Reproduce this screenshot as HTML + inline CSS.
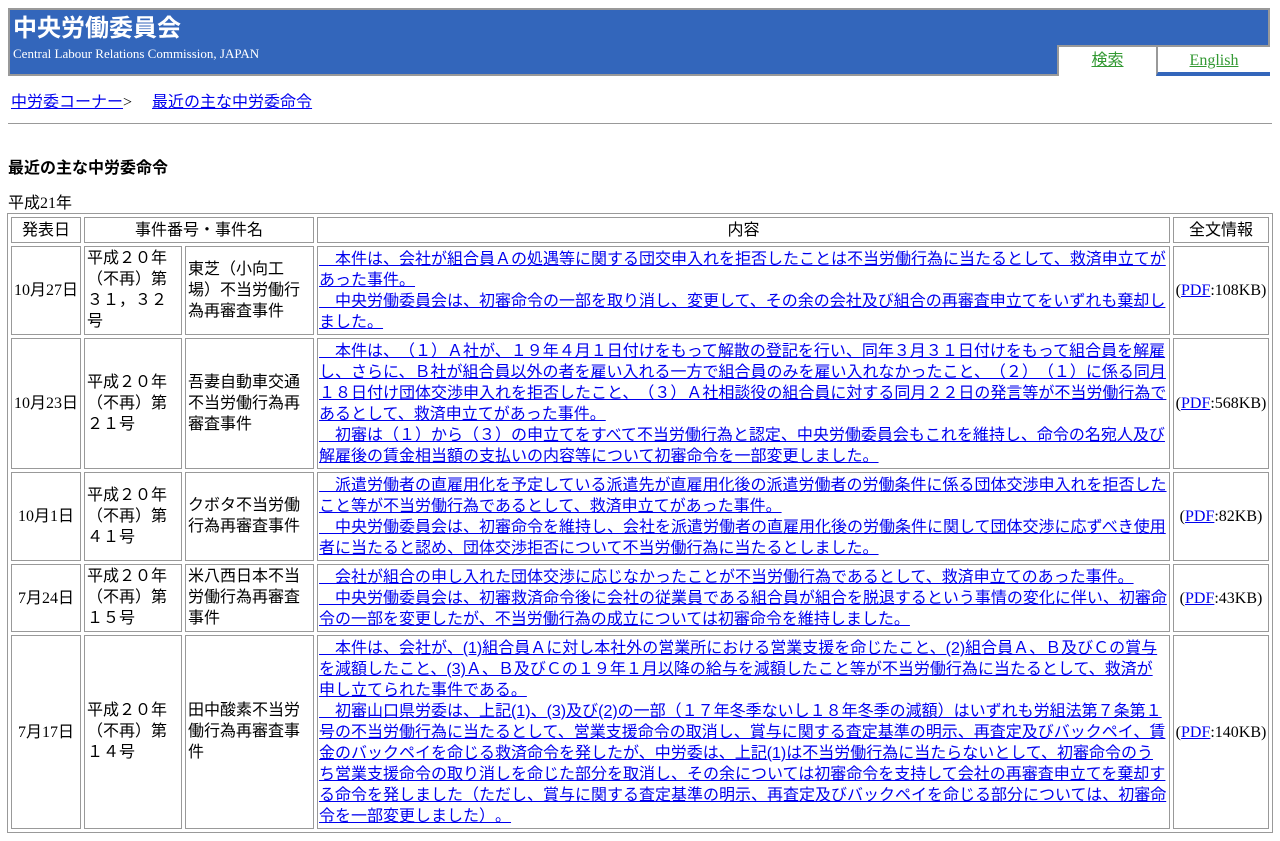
<!DOCTYPE html>
<html><head><meta charset="utf-8"><style>
body{margin:8px;font-family:"Liberation Serif","Noto Sans CJK JP",serif;font-size:16px;color:#000;background:#fff;text-spacing-trim:space-all}
#hd{position:relative;height:64px;width:1258px;background:#3366bb;border:2px solid #999;margin-top:0}
#hd h1{margin:0;position:absolute;left:3px;top:3px;color:#fff;font-size:24px;font-weight:bold;font-family:"Liberation Sans","Noto Sans CJK JP",sans-serif;line-height:32px}
#hd .en{position:absolute;left:3px;top:36px;color:#fff;font-size:13px}
.tab{position:absolute;top:35px;height:29px;background:#fff;text-align:center;line-height:28px}
.tab a{color:#339933}
#t1{left:1047px;width:97px;border-left:2px solid #999;border-top:2px solid #999}
#t2{left:1146px;width:112px;border-left:2px solid #999;border-top:2px solid #999;height:25px;border-bottom:4px solid #3366bb}
.bc{margin:16px 0 0 3px;line-height:21px}
a{color:#0000ee}
hr{border:0;border-top:1px solid #999;margin:10px 0 0}
h3{font-size:16px;margin:30px 0 0;font-family:"Liberation Sans","Noto Sans CJK JP",sans-serif}
.yr{margin-top:16px;line-height:20px}
table{border-collapse:separate;border-spacing:3px;border:1px solid #999;table-layout:fixed;width:1265px;margin-left:-1px;margin-top:-1px;font-family:"Liberation Serif","Noto Sans CJK JP",serif}
td,th{border:1px solid #999;padding:1px 2px 2px;line-height:21px;font-weight:normal;vertical-align:middle}
th{text-align:center;padding:2px 1px 1px}
td.c{text-align:center;padding:1px}
td.n{font-family:"Liberation Sans","Noto Sans CJK JP",sans-serif}
td.x{padding:2px 1px 1px;font-family:"Liberation Sans","Noto Sans CJK JP",sans-serif}
</style></head><body>
<div id="hd"><h1>中央労働委員会</h1><div class="en">Central Labour Relations Commission, JAPAN</div>
<div class="tab" id="t1"><a href="#">検索</a></div><div class="tab" id="t2"><a href="#">English</a></div></div>
<div class="bc"><a href="#">中労委コーナー</a>&gt;　 <a href="#">最近の主な中労委命令</a></div>
<hr>
<h3>最近の主な中労委命令</h3>
<div class="yr">平成21年</div>
<table>
<colgroup><col style="width:70px"><col style="width:98px"><col style="width:129px"><col style="width:853px"><col style="width:96px"></colgroup>
<tr><th>発表日</th><th colspan="2" class="n">事件番号・事件名</th><th>内容</th><th>全文情報</th></tr>
<tr><td class="c">10月27日</td><td class="n">平成２０年（不再）第３１，３２号</td><td class="n">東芝（小向工場）不当労働行為再審査事件</td><td class="x"><a href="#">　本件は、会社が組合員Ａの処遇等に関する団交申入れを拒否したことは不当労働行為に当たるとして、救済申立てがあった事件。<br>　中央労働委員会は、初審命令の一部を取り消し、変更して、その余の会社及び組合の再審査申立てをいずれも棄却しました。</a></td><td class="c">(<a href="#">PDF</a>:108KB)</td></tr>
<tr><td class="c">10月23日</td><td class="n">平成２０年（不再）第２１号</td><td class="n">吾妻自動車交通不当労働行為再審査事件</td><td class="x"><a href="#">　本件は、（１）Ａ社が、１９年４月１日付けをもって解散の登記を行い、同年３月３１日付けをもって組合員を解雇し、さらに、Ｂ社が組合員以外の者を雇い入れる一方で組合員のみを雇い入れなかったこと、（２）（１）に係る同月１８日付け団体交渉申入れを拒否したこと、（３）Ａ社相談役の組合員に対する同月２２日の発言等が不当労働行為であるとして、救済申立てがあった事件。<br>　初審は（１）から（３）の申立てをすべて不当労働行為と認定、中央労働委員会もこれを維持し、命令の名宛人及び解雇後の賃金相当額の支払いの内容等について初審命令を一部変更しました。</a></td><td class="c">(<a href="#">PDF</a>:568KB)</td></tr>
<tr><td class="c">10月1日</td><td class="n">平成２０年（不再）第４１号</td><td class="n">クボタ不当労働行為再審査事件</td><td class="x"><a href="#">　派遣労働者の直雇用化を予定している派遣先が直雇用化後の派遣労働者の労働条件に係る団体交渉申入れを拒否したこと等が不当労働行為であるとして、救済申立てがあった事件。<br>　中央労働委員会は、初審命令を維持し、会社を派遣労働者の直雇用化後の労働条件に関して団体交渉に応ずべき使用者に当たると認め、団体交渉拒否について不当労働行為に当たるとしました。</a></td><td class="c">(<a href="#">PDF</a>:82KB)</td></tr>
<tr><td class="c">7月24日</td><td class="n">平成２０年（不再）第１５号</td><td class="n">米八西日本不当労働行為再審査事件</td><td class="x"><a href="#">　会社が組合の申し入れた団体交渉に応じなかったことが不当労働行為であるとして、救済申立てのあった事件。<br>　中央労働委員会は、初審救済命令後に会社の従業員である組合員が組合を脱退するという事情の変化に伴い、初審命令の一部を変更したが、不当労働行為の成立については初審命令を維持しました。</a></td><td class="c">(<a href="#">PDF</a>:43KB)</td></tr>
<tr><td class="c">7月17日</td><td class="n">平成２０年（不再）第１４号</td><td class="n">田中酸素不当労働行為再審査事件</td><td class="x"><a href="#">　本件は、会社が、(1)組合員Ａに対し本社外の営業所における営業支援を命じたこと、(2)組合員Ａ、Ｂ及びＣの賞与を減額したこと、(3)Ａ、Ｂ及びＣの１９年１月以降の給与を減額したこと等が不当労働行為に当たるとして、救済が申し立てられた事件である。<br>　初審山口県労委は、上記(1)、(3)及び(2)の一部（１７年冬季ないし１８年冬季の減額）はいずれも労組法第７条第１号の不当労働行為に当たるとして、営業支援命令の取消し、賞与に関する査定基準の明示、再査定及びバックペイ、賃金のバックペイを命じる救済命令を発したが、中労委は、上記(1)は不当労働行為に当たらないとして、初審命令のうち営業支援命令の取り消しを命じた部分を取消し、その余については初審命令を支持して会社の再審査申立てを棄却する命令を発しました（ただし、賞与に関する査定基準の明示、再査定及びバックペイを命じる部分については、初審命令を一部変更しました）。</a></td><td class="c">(<a href="#">PDF</a>:140KB)</td></tr>
</table>
</body></html>
